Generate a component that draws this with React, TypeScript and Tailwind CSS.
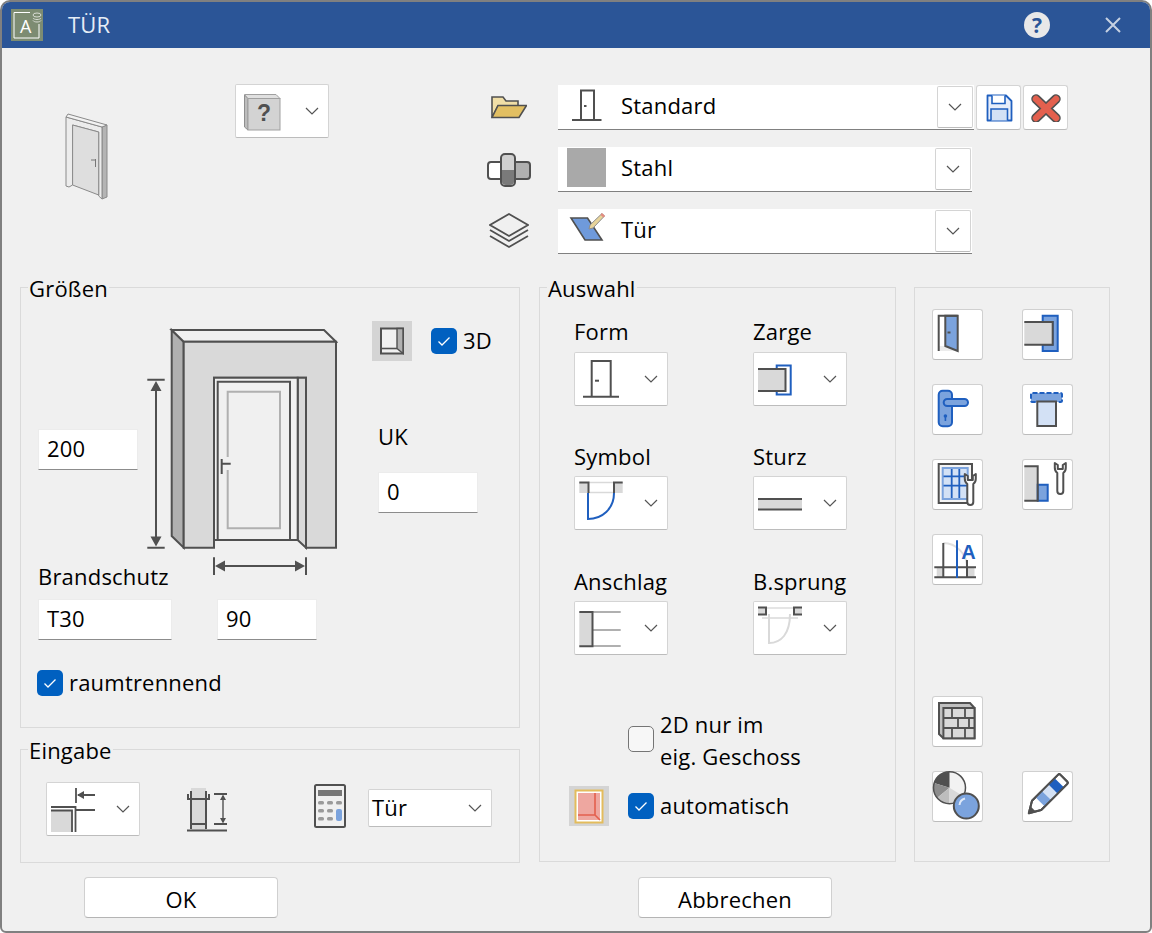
import React from "react";

const dark = "#505050";
const blue = "#1f5fbf";
const mid = "#7ba3dd";
const pale = "#d3e1f5";
const grey = "#d9d9d9";

const Chevron = () => (
  <svg viewBox="0 0 14 8" className="w-[14px] h-[8px] shrink-0">
    <path d="M1 1 L7 7 L13 1" fill="none" stroke="#555" strokeWidth="1.2" />
  </svg>
);

const IconCombo = ({ children }: { children: React.ReactNode }) => (
  <div className="flex items-center w-[94px] h-[54px] shrink-0 bg-white border border-[#d4d4d4] border-b-[#bcbcbc] rounded-[2px]">
    <div className="w-[69px] h-[51px] shrink-0">{children}</div>
    <Chevron />
  </div>
);

const DropButton = () => (
  <div className="flex items-center justify-center w-[36px] h-[42px] shrink-0 border border-[#d4d4d4] border-b-[#bcbcbc] rounded-[2px] bg-white">
    <Chevron />
  </div>
);

const Check = ({ on = true }: { on?: boolean }) =>
  on ? (
    <div className="w-[26px] h-[26px] shrink-0 rounded-[5px] bg-[#0060c0] flex items-center justify-center">
      <svg viewBox="0 0 26 26" className="w-[26px] h-[26px]">
        <path d="M7.5 13.5 L11 17 L18.5 9.5" fill="none" stroke="#fff" strokeWidth="1.3" />
      </svg>
    </div>
  ) : (
    <div className="w-[26px] h-[26px] shrink-0 rounded-[5px] bg-[#f7f7f7] border-[1.5px] border-[#757575]" />
  );

const Field = ({ value, className }: { value: string; className: string }) => (
  <div className={`h-[41px] flex items-center pl-[8px] pb-[2px] bg-white border border-[#ececec] border-b-[#8c8c8c] ${className}`}>{value}</div>
);

const Group = ({ title, className, children }: { title?: string; className: string; children: React.ReactNode }) => (
  <div className={`border border-[#dadada] shrink-0 ${className}`}>
    {title && <div className="-mt-[14px] ml-[7px] w-fit px-[1px] h-[30px] bg-[#f0f0f0] leading-[28px]">{title}</div>}
    {children}
  </div>
);

const ToolButton = ({ children }: { children: React.ReactNode }) => (
  <div className="w-[51px] h-[51px] bg-white border border-[#d0d0d0] border-b-[#bcbcbc] rounded-[3px]">
    <svg viewBox="1 1 49 49" className="w-[49px] h-[49px] overflow-visible">
      {children}
    </svg>
  </div>
);

const DoorThumb = () => (
  <svg viewBox="65 113 44 88" className="w-[44px] h-[88px]">
    <path d="M102 127 L107 125 V197 L102 199 Z" fill="#b4b4b4" stroke="#8a8a8a" />
    <path d="M66 117 L102 127 V199 L98.7 196 V132 L72.6 125 V185 L69 187 L66 186 Z" fill="#ececec" stroke="#8a8a8a" />
    <path d="M72.6 125 L98.7 132 V195 L72.6 185 Z" fill="#dedede" stroke="#8a8a8a" />
    <path d="M68 114 L107 125 L102 127 L66 117 Z" fill="#f2f2f2" stroke="#8a8a8a" />
    <path d="M91 160 H96 M95.5 159 V167" stroke="#777" fill="none" />
  </svg>
);

const DoorDrawing = () => (
  <svg viewBox="147 325 191 251" className="w-[191px] h-[251px]">
    <g stroke={dark} strokeWidth="2" strokeLinejoin="miter">
      <path d="M171.7 330 L183.7 341.7 V547.7 L171.7 536 Z" fill="#b0b0b0" />
      <path d="M171.7 330 H324 L336 341.7 H183.7 Z" fill="#f0f0f0" />
      <path d="M183.7 341.7 H336 V547.7 H306 V377.7 H214 V547.7 H183.7 Z" fill={grey} />
      <path d="M297.7 377.7 H306 V547.7 L297.7 540 Z" fill={grey} />
      <path d="M214 377.7 H297.7 V540 H214 Z" fill="#f0f0f0" />
      <path d="M217.7 381.7 H290 V540 H217.7 Z" fill="#f0f0f0" />
      <path d="M221.7 459 V474 M221.7 463.7 H230.7" fill="none" />
    </g>
    <path d="M227.7 457 V391.7 H280 V528.3 H227.7 V470" fill="none" stroke="#b0b0b0" strokeWidth="2" />
    <g stroke={dark} strokeWidth="2" fill={dark}>
      <path d="M147.3 379.7 H164.7 M147.3 547.7 H164.7 M156 385 V542" fill="none" />
      <path d="M156 381 L161.5 391 H150.5 Z M156 546.5 L161.5 536.5 H150.5 Z" stroke="none" />
      <path d="M214 557.3 V575 M306 557.3 V575 M218 566 H302" fill="none" />
      <path d="M215 566 L225 560.5 V571.5 Z M305 566 L295 560.5 V571.5 Z" stroke="none" />
    </g>
  </svg>
);

const Wrench = ({ x, y }: { x: number; y: number }) => (
  <path
    transform={`translate(${x} ${y})`}
    d="M-5.5 0 V4.5 A6.5 6.5 0 0 0 -3 10 V28 A3 3 0 0 0 3 28 V10 A6.5 6.5 0 0 0 5.5 4.5 V0 L2.5 2 V6 H-2.5 V2 Z"
    fill="#fff"
    stroke={dark}
    strokeWidth="2"
    strokeLinejoin="round"
  />
);

const SymbolIcon = ({ light = false, box }: { light?: boolean; box: string }) => (
  <svg viewBox={box} className="w-full h-full">
    {light ? (
      <>
        <path d="M758 607 H802" stroke="#dcdcdc" strokeWidth="1.5" />
        <path d="M758 606.5 H766 V613.5 H758 M802 606.5 H794 V613.5 H802" fill={grey} stroke={dark} strokeWidth="2" />
        <path d="M762 617 H798" stroke={grey} strokeWidth="1.5" />
        <path d="M769 613 V642 C781 642 790 633 790 613" fill="none" stroke={grey} strokeWidth="2" />
      </>
    ) : (
      <>
        <path d="M588 481.5 H614 M588 491.5 H614" stroke={grey} strokeWidth="1.5" />
        <path d="M579.3 481.5 H588.5 V492 H579.3 Z M614 481.5 H622.7 V492 H614 Z" fill={grey} />
        <path d="M579.3 481.5 H588.5 V492 M622.7 481.5 H614 V492" fill="none" stroke={dark} strokeWidth="2" />
        <path d="M588 492 V518 C602 518 614 508 614 492" fill="none" stroke={blue} strokeWidth="2" />
      </>
    )}
  </svg>
);

export default function App() {
  return (
    <div className="w-[1152px] h-[933px] bg-[#f0f0f0] border-2 border-[#808080] rounded-t-[10px] rounded-b-[6px] overflow-hidden flex flex-col text-[22px] tracking-[0.2px] text-black font-['Open_Sans','Noto_Sans',sans-serif]">
      {/* title bar */}
      <div className="h-[46px] shrink-0 bg-[#2b5597] flex items-center pl-[9px] pr-[29px]">
        <svg viewBox="0 0 32 32" className="w-[32px] h-[32px] shrink-0">
          <rect width="32" height="32" fill="#7d8c72" />
          <path d="M19 3.5 H3 V29 H28 V15" fill="none" stroke="#fff" strokeWidth="1" />
          <text x="9" y="24" fontSize="18" fill="#fff" fontFamily="Open Sans">A</text>
          <ellipse cx="26" cy="6" rx="4" ry="2" fill="none" stroke="#d8dcd3" />
          <path d="M22 9 C23 11 29 11 30 9 M22 11.5 C23 13.5 29 13.5 30 11.5" fill="none" stroke="#d8dcd3" />
        </svg>
        <span className="ml-[25px] pb-[2px] text-[#e6edf6]">TÜR</span>
        <div className="ml-auto w-[26px] h-[26px] rounded-full bg-[#e8e8e8] text-[#2b5597] font-bold text-[21px] leading-[26px] text-center">?</div>
        <svg viewBox="0 0 16 16" className="ml-[55px] w-[16px] h-[16px]">
          <path d="M1 1 L15 15 M15 1 L1 15" stroke="#c6d1e2" strokeWidth="2" />
        </svg>
      </div>

      {/* top section */}
      <div className="h-[239px] shrink-0 flex items-start">
        <div className="ml-[63px] mt-[65px]">
          <DoorThumb />
        </div>
        <div className="ml-[126px] mt-[36px]">
          <IconCombo>
            <svg viewBox="236 85 69 51" className="w-full h-full">
              <path d="M244.5 94 L248 97.5 V129 L244.5 126 Z" fill="#bdbdbd" stroke="#8f8f8f" />
              <path d="M244.5 93.5 H276 L280 97.5 H248 Z" fill="#e0e0e0" stroke="#a0a0a0" />
              <rect x="248" y="97.5" width="32" height="31.5" fill="#d3d3d3" stroke="#a0a0a0" />
              <text x="264" y="120" fontSize="23" fontWeight="700" fill={dark} textAnchor="middle" fontFamily="Liberation Sans">?</text>
            </svg>
          </IconCombo>
        </div>
        <div className="ml-[158px] mt-[37px] flex flex-col gap-[17px]">
          <div className="flex items-center h-[45px]">
            <div className="w-[44px] flex justify-center shrink-0">
              <svg viewBox="491 98 36 23" className="w-[36px] h-[23px]">
                <path d="M492 119.5 V99 H503 L506 103 H518 V108 H498 Z" fill="#f0dea6" stroke={dark} strokeWidth="1.6" />
                <path d="M492 119.5 L498 107.5 H526.5 L519 119.5 Z" fill="#e2bf62" stroke={dark} strokeWidth="1.6" />
              </svg>
            </div>
            <div className="ml-[27px] w-[416px] h-[45px] flex items-center bg-white border-b border-[#808080]">
              <svg viewBox="558 85 63 44" className="w-[63px] h-[44px] shrink-0">
                <path d="M581 119.5 V90.5 H594 V119.5" fill="none" stroke={dark} strokeWidth="2" />
                <path d="M572 120 H601.5" stroke={dark} strokeWidth="2" />
                <path d="M584 106 H586.5" stroke={dark} strokeWidth="2" />
              </svg>
              <span className="pb-[4px]">Standard</span>
              <div className="ml-auto mr-[1px]">
                <DropButton />
              </div>
            </div>
            <div className="ml-[2px] w-[45px] h-[45px] flex items-center justify-center bg-white border border-[#d4d4d4] border-b-[#bcbcbc] rounded-[3px]">
              <svg viewBox="0 0 28 28" className="w-[28px] h-[28px]">
                <path d="M2.5 1.5 H21 L26.5 7 V26.5 H2.5 Z" fill="#e8eefa" stroke={blue} strokeWidth="1.8" strokeLinejoin="round" />
                <path d="M7 1.5 V9.5 H20 V1.5" fill="#fff" stroke={blue} strokeWidth="1.6" />
                <path d="M6 26.5 V15 H22.5 V26.5" fill="#d3e1f5" stroke={blue} strokeWidth="1.6" />
              </svg>
            </div>
            <div className="ml-[2px] w-[45px] h-[45px] flex items-center justify-center bg-white border border-[#d4d4d4] border-b-[#bcbcbc] rounded-[3px]">
              <svg viewBox="0 0 30 28" className="w-[30px] h-[28px]">
                <path d="M5 5 L25 24 M25 5 L5 24" stroke={dark} strokeWidth="9.5" strokeLinecap="round" />
                <path d="M5 5 L25 24 M25 5 L5 24" stroke="#e3604e" strokeWidth="6.5" strokeLinecap="round" />
              </svg>
            </div>
          </div>

          <div className="flex items-center h-[45px]">
            <div className="w-[44px] flex justify-center shrink-0">
              <svg viewBox="487 152 44 34" className="w-[44px] h-[34px]">
                <rect x="488" y="161" width="21" height="17" rx="3" fill="#fff" stroke={dark} strokeWidth="2" />
                <rect x="513" y="161" width="17" height="17" rx="3" fill="#b0b0b0" stroke={dark} strokeWidth="2" />
                <rect x="501" y="153" width="14" height="32" rx="4" fill="#d0d0d0" stroke={dark} strokeWidth="2" />
                <path d="M502 169 H514 V181 C514 183 512 184 510 184 H506 C504 184 502 183 502 181 Z" fill="#7a7a7a" />
              </svg>
            </div>
            <div className="ml-[27px] w-[414px] h-[45px] flex items-center bg-white border-b border-[#808080]">
              <div className="ml-[9px] mr-[15px] w-[39px] h-[39px] -mt-[3px] bg-[#a9a9a9] shrink-0" />
              <span className="pb-[4px]">Stahl</span>
              <div className="ml-auto mr-[1px]">
                <DropButton />
              </div>
            </div>
          </div>

          <div className="flex items-center h-[45px]">
            <div className="w-[44px] flex justify-center shrink-0">
              <svg viewBox="489 214 40 38" className="w-[40px] h-[38px]">
                <path d="M490 237 L509 248 L528 237 M490 231 L509 242 L528 231" fill="none" stroke={dark} strokeWidth="1.8" />
                <path d="M509 215 L528 226 L509 237 L490 226 Z" fill="#f0f0f0" stroke={dark} strokeWidth="1.8" />
              </svg>
            </div>
            <div className="ml-[27px] w-[414px] h-[45px] flex items-center bg-white border-b border-[#808080]">
              <svg viewBox="558 209 63 44" className="w-[63px] h-[44px] shrink-0">
                <path d="M571 218 H587.5 L602 240 H585 Z" fill="#6f9adb" stroke={dark} strokeWidth="1.6" />
                <path d="M590 225 L602 213.5 L604.5 216 L593 228 L589 229 Z" fill="#e8d49a" stroke="#8c8c8c" />
                <path d="M600.5 215 L602 213 L605 216 L603.5 217.5 Z" fill="#e58b80" />
              </svg>
              <span className="pb-[4px]">Tür</span>
              <div className="ml-auto mr-[1px]">
                <DropButton />
              </div>
            </div>
          </div>
        </div>
      </div>

      {/* main groups */}
      <div className="h-[574px] shrink-0 flex items-start pl-[18px]">
        <div className="w-[500px] shrink-0 flex flex-col gap-[21px]">
          <Group title="Größen" className="h-[441px]">
            <div className="flex items-start pl-[16px]">
              <div className="w-[110px] shrink-0 mt-[125px]">
                <Field value="200" className="ml-[1px] w-[100px]" />
                <div className="ml-[1px] mt-[92px] h-[30px] leading-[28px] whitespace-nowrap">Brandschutz</div>
              </div>
              <div className="mt-[21px] shrink-0">
                <DoorDrawing />
              </div>
              <div className="ml-[34px] mt-[17px]">
                <div className="flex items-center">
                  <div className="w-[40px] h-[40px] bg-[#d4d4d4] shrink-0">
                    <svg viewBox="372 321 40 40" className="w-full h-full">
                      <rect x="381" y="328.5" width="22" height="25" fill="#f0f0f0" stroke={dark} strokeWidth="2" />
                      <path d="M397 328.5 H403 V353.5 L397 348.5 Z" fill="#b0b0b0" stroke={dark} strokeWidth="1.4" />
                      <path d="M381 348.5 H397" stroke={dark} strokeWidth="1.6" />
                    </svg>
                  </div>
                  <div className="ml-[19px]">
                    <Check />
                  </div>
                  <span className="ml-[6px] pb-[2px]">3D</span>
                </div>
                <div className="ml-[6px] mt-[61px] h-[30px] leading-[28px]">UK</div>
                <Field value="0" className="ml-[6px] mt-[20px] w-[100px]" />
              </div>
            </div>
            <div className="flex pl-[17px] mt-[7px]">
              <Field value="T30" className="w-[134px]" />
              <Field value="90" className="ml-[45px] w-[100px]" />
            </div>
            <div className="flex items-center pl-[16px] mt-[26px] gap-[6px]">
              <Check />
              <span>raumtrennend</span>
            </div>
          </Group>

          <Group title="Eingabe" className="h-[114px]">
            <div className="flex items-start pl-[25px] mt-[16px]">
              <IconCombo>
                <svg viewBox="47 783 69 51" className="w-full h-full">
                  <rect x="51" y="809" width="22" height="22" fill={grey} />
                  <path d="M51 806 H75.5 V831 M51 809.5 H72 V831 M76 809 H95" fill="none" stroke={dark} strokeWidth="1.8" />
                  <path d="M76 787 V802 M78 794 H95" fill="none" stroke={dark} strokeWidth="1.8" />
                  <path d="M77 794 L84 790 V798 Z" fill={dark} />
                </svg>
              </IconCombo>
              <svg viewBox="187 788 40 44" className="ml-[47px] mt-[6px] w-[40px] h-[44px] shrink-0">
                <rect x="191" y="788" width="15" height="43" fill={grey} />
                <path d="M191 791 V829 M206 791 V829 M188 794 V799 H209 V794 M191 824 H206 M187 830.5 H227 M214 794 H227 M214 824 H227" fill="none" stroke={dark} strokeWidth="2" />
                <path d="M223 797 V821" stroke={dark} strokeWidth="1.4" />
                <path d="M223 794.5 L226 800 H220 Z M223 823.5 L226 818 H220 Z" fill={dark} />
              </svg>
              <svg viewBox="314 784 32 44" className="ml-[87px] mt-[2px] w-[32px] h-[44px] shrink-0">
                <rect x="315" y="785" width="30" height="42" rx="1.5" fill="#f0f0f0" stroke={dark} strokeWidth="2" />
                <rect x="318" y="790" width="24" height="6" fill="#777" />
                <g fill="#9a9a9a">
                  <rect x="318" y="801" width="6" height="3.4" rx="1.5" />
                  <rect x="327" y="801" width="6" height="3.4" rx="1.5" />
                  <rect x="336" y="801" width="6" height="3.4" rx="1.5" />
                  <rect x="318" y="809" width="6" height="3.4" rx="1.5" />
                  <rect x="327" y="809" width="6" height="3.4" rx="1.5" />
                  <rect x="318" y="817" width="6" height="3.4" rx="1.5" />
                  <rect x="327" y="817" width="6" height="3.4" rx="1.5" />
                </g>
                <rect x="336" y="809" width="6" height="12" rx="2" fill={mid} />
              </svg>
              <div className="ml-[22px] mt-[7px] w-[124px] h-[38px] flex items-center justify-between pl-[3px] pr-[9px] bg-white border border-[#d4d4d4] border-b-[#bcbcbc] rounded-[2px]">
                <span className="pb-[2px]">Tür</span>
                <Chevron />
              </div>
            </div>
          </Group>
        </div>

        <Group title="Auswahl" className="ml-[19px] w-[357px] h-[575px]">
          <div className="pl-[34px] mt-[13px] grid grid-cols-[179px_94px] grid-rows-[125px_125px_89px]">
            <div>
              <div className="h-[30px] leading-[28px] mb-[5px]">Form</div>
              <IconCombo>
                <svg viewBox="575 353 69 51" className="w-full h-full">
                  <path d="M591.7 395 V360 H610.7 V395" fill="none" stroke={dark} strokeWidth="2" />
                  <path d="M583 395.7 H619" stroke={dark} strokeWidth="2" />
                  <path d="M595 379.7 H599" stroke={dark} strokeWidth="2" />
                </svg>
              </IconCombo>
            </div>
            <div>
              <div className="h-[30px] leading-[28px] mb-[5px]">Zarge</div>
              <IconCombo>
                <svg viewBox="754 353 69 51" className="w-full h-full">
                  <path d="M776.7 368 V364.5 H790.7 V393.5 H776.7 V390" fill="#fff" stroke={blue} strokeWidth="2" />
                  <path d="M758 368 H785.5 V390 H758 Z" fill={grey} />
                  <path d="M758 368 H785.5 V390 H758" fill="none" stroke={dark} strokeWidth="2" />
                </svg>
              </IconCombo>
            </div>
            <div>
              <div className="h-[30px] leading-[28px] mb-[4px]">Symbol</div>
              <IconCombo>
                <SymbolIcon box="575 477 69 51" />
              </IconCombo>
            </div>
            <div>
              <div className="h-[30px] leading-[28px] mb-[4px]">Sturz</div>
              <IconCombo>
                <svg viewBox="754 477 69 51" className="w-full h-full">
                  <rect x="758" y="498" width="44" height="10.5" fill={grey} />
                  <path d="M758 498 H802 M758 508.5 H802" stroke={dark} strokeWidth="2" />
                </svg>
              </IconCombo>
            </div>
            <div>
              <div className="h-[30px] leading-[28px] mb-[4px]">Anschlag</div>
              <IconCombo>
                <svg viewBox="575 602 69 51" className="w-full h-full">
                  <rect x="579.3" y="611" width="13" height="34.5" fill={grey} />
                  <path d="M592 611 H620.7 M592 629 H620.7 M592 645 H620.7" stroke="#b0b0b0" strokeWidth="2" />
                  <path d="M579.3 611 H592.5 V645.3 H579.3" fill="none" stroke={dark} strokeWidth="2" />
                </svg>
              </IconCombo>
            </div>
            <div>
              <div className="h-[30px] leading-[28px] mb-[4px]">B.sprung</div>
              <IconCombo>
                <SymbolIcon light box="754 602 69 51" />
              </IconCombo>
            </div>
          </div>
          <div className="ml-[88px] mt-[52px] flex items-center gap-[6px]">
            <div className="mb-[2px]">
              <Check on={false} />
            </div>
            <div className="leading-[32px]">
              2D nur im
              <br />
              eig. Geschoss
            </div>
          </div>
          <div className="ml-[29px] mt-[14px] flex items-center">
            <div className="w-[40px] h-[40px] bg-[#d4d4d4] shrink-0">
              <svg viewBox="569 786 40 40" className="w-full h-full">
                <rect x="575.5" y="790.5" width="27" height="32" fill="#fff" stroke="#e3bc5c" strokeWidth="2" />
                <rect x="578" y="793" width="22" height="27" fill="#eea7a0" />
                <path d="M595 793 V815 H578 M595 815 L600 820" fill="none" stroke="#e3604e" strokeWidth="1.6" />
              </svg>
            </div>
            <div className="ml-[19px]">
              <Check />
            </div>
            <span className="ml-[6px] pb-[2px]">automatisch</span>
          </div>
        </Group>

        <Group className="ml-[18px] w-[196px] h-[575px]">
          <div className="pl-[17px] pt-[21px] grid grid-cols-[90px_51px] gap-y-[24px]">
            <ToolButton>
              <path d="M6.7 37 L13.3 37 L25.7 42 H6.7 Z" fill="#ececec" />
              <path d="M13.3 6.7 H25.7 V42 L13.3 37 Z" fill={mid} stroke={dark} strokeWidth="2" />
              <path d="M6.7 42 V6.7 H25.7" fill="none" stroke={dark} strokeWidth="2" />
              <path d="M15.5 23.5 H18.5" stroke={dark} strokeWidth="2" />
            </ToolButton>
            <ToolButton>
              <path d="M20.7 6.7 H35.7 V42 H20.7 V35.7 H30.7 V13 H20.7 Z" fill={mid} stroke={blue} strokeWidth="2" />
              <path d="M2.3 13 H30.7 V35.7 H2.3 Z" fill={grey} />
              <path d="M2.3 13 H30.7 V35.7 H2.3" fill="none" stroke={dark} strokeWidth="2" />
            </ToolButton>
            <ToolButton>
              <rect x="6.7" y="6.7" width="13.3" height="35.6" rx="4" fill={mid} stroke={blue} strokeWidth="2" />
              <rect x="11.7" y="15" width="24.3" height="7" rx="3.5" fill={mid} stroke={blue} strokeWidth="2" />
              <circle cx="13.4" cy="32" r="1.8" fill={blue} />
              <path d="M13.4 32 V37" stroke={blue} strokeWidth="1.6" />
            </ToolButton>
            <ToolButton>
              <rect x="9" y="9" width="31" height="9" rx="1.5" fill={mid} stroke={blue} strokeWidth="2" strokeDasharray="5 2" />
              <rect x="15.3" y="17.5" width="18.7" height="24.5" fill={pale} stroke={dark} strokeWidth="2" />
            </ToolButton>
            <ToolButton>
              <rect x="6.7" y="5" width="33.3" height="39" fill="#f4f4f4" stroke={dark} strokeWidth="2" />
              <rect x="10.7" y="9" width="25" height="31" fill={pale} stroke={mid} strokeWidth="2" />
              <path d="M19.7 10 V39 M27.3 10 V39 M11.5 17.3 H35 M11.5 26.7 H35" stroke={blue} strokeWidth="1.8" />
              <Wrench x={38.3} y={15} />
            </ToolButton>
            <ToolButton>
              <path d="M2.3 7.3 H15.7 V41.7 H2.3 Z" fill={grey} />
              <path d="M15.7 25.7 H25.7 V41.7 H15.7 Z" fill={mid} stroke={blue} strokeWidth="2" />
              <path d="M2.3 7.3 H15.7 V41.7 H2.3" fill="none" stroke={dark} strokeWidth="2" />
              <Wrench x={38.3} y={4} />
            </ToolButton>
            <ToolButton>
              <rect x="4.7" y="33" width="6.5" height="10" fill={grey} />
              <rect x="35.5" y="33" width="7" height="10" fill={grey} />
              <path d="M11.3 9 C24 9 35 20 35 33" fill="none" stroke="#e0e0e0" strokeWidth="2" />
              <path d="M2.3 33.3 H44 M2.3 43.3 H44 M11.3 9 V43.3 M35 26 V43.3" fill="none" stroke={dark} strokeWidth="2" />
              <path d="M25 6.3 V44" stroke={blue} strokeWidth="2" />
              <text x="36.5" y="25" fontSize="20" fontWeight="700" fill={blue} textAnchor="middle" fontFamily="Liberation Sans">A</text>
            </ToolButton>
          </div>
          <div className="pl-[17px] mt-[111px] grid grid-cols-[90px_51px] gap-y-[24px]">
            <ToolButton>
              <path d="M7 7 H38 L42.5 12 V42.3 H11.4 L7 38 Z" fill="#c0c0c0" stroke={dark} strokeWidth="2" />
              <rect x="11.4" y="12" width="31.1" height="30.3" fill={grey} stroke={dark} strokeWidth="2" />
              <path d="M11.4 22 H42.5 M11.4 32 H42.5 M20 12 V22 M33 12 V22 M26 22 V32 M37 22 V32 M20 32 V42 M33 32 V42" stroke={dark} strokeWidth="1.8" fill="none" />
            </ToolButton>
            <div />
            <ToolButton>
              <circle cx="17.5" cy="16.7" r="16" fill="#f2f2f2" />
              <path d="M17.5 16.7 V0.7 A16 16 0 0 0 2 12 Z" fill="#505050" />
              <path d="M17.5 16.7 L2 12 A16 16 0 0 0 5 27 Z" fill="#8c8c8c" />
              <path d="M17.5 16.7 L5 27 A16 16 0 0 0 17.5 32.7 Z" fill="#bdbdbd" />
              <path d="M17.5 16.7 L17.5 32.7 A16 16 0 0 0 31 25 Z" fill="#d9d9d9" />
              <circle cx="17.5" cy="16.7" r="16" fill="none" stroke={dark} strokeWidth="1.5" />
              <circle cx="34.3" cy="35" r="12.5" fill={mid} stroke={dark} strokeWidth="2" />
              <path d="M27.5 34 A7.5 7.5 0 0 1 33 27.5" fill="none" stroke="#dfe9f8" strokeWidth="2" />
            </ToolButton>
            <ToolButton>
              <g transform="translate(24.5 24.5) rotate(45)" stroke={dark} strokeWidth="2" strokeLinejoin="round">
                <path d="M-6.5 -23 A1.5 1.5 0 0 1 -5 -24.5 H5 A1.5 1.5 0 0 1 6.5 -23 V14 L0 25 L-6.5 14 Z" fill="#fff" />
                <rect x="-6.5" y="-18" width="13" height="9" fill={blue} stroke="none" />
                <rect x="-6.5" y="-9" width="13" height="9" fill={pale} stroke="none" />
                <rect x="-6.5" y="0" width="13" height="9" fill={mid} stroke="none" />
                <path d="M-6.5 -23 A1.5 1.5 0 0 1 -5 -24.5 H5 A1.5 1.5 0 0 1 6.5 -23 V14 L0 25 L-6.5 14 Z" fill="none" />
                <path d="M-4 19 L0 25 L4 19 Z" fill={dark} stroke="none" />
              </g>
            </ToolButton>
          </div>
        </Group>
      </div>

      {/* buttons */}
      <div className="mt-[16px] flex pl-[82px]">
        <div className="w-[194px] h-[41px] flex items-center justify-center pt-[4px] bg-white border border-[#d0d0d0] border-b-[#b4b4b4] rounded-[4px]">OK</div>
        <div className="ml-[360px] w-[194px] h-[41px] flex items-center justify-center pt-[4px] bg-white border border-[#d0d0d0] border-b-[#b4b4b4] rounded-[4px]">Abbrechen</div>
      </div>
    </div>
  );
}
